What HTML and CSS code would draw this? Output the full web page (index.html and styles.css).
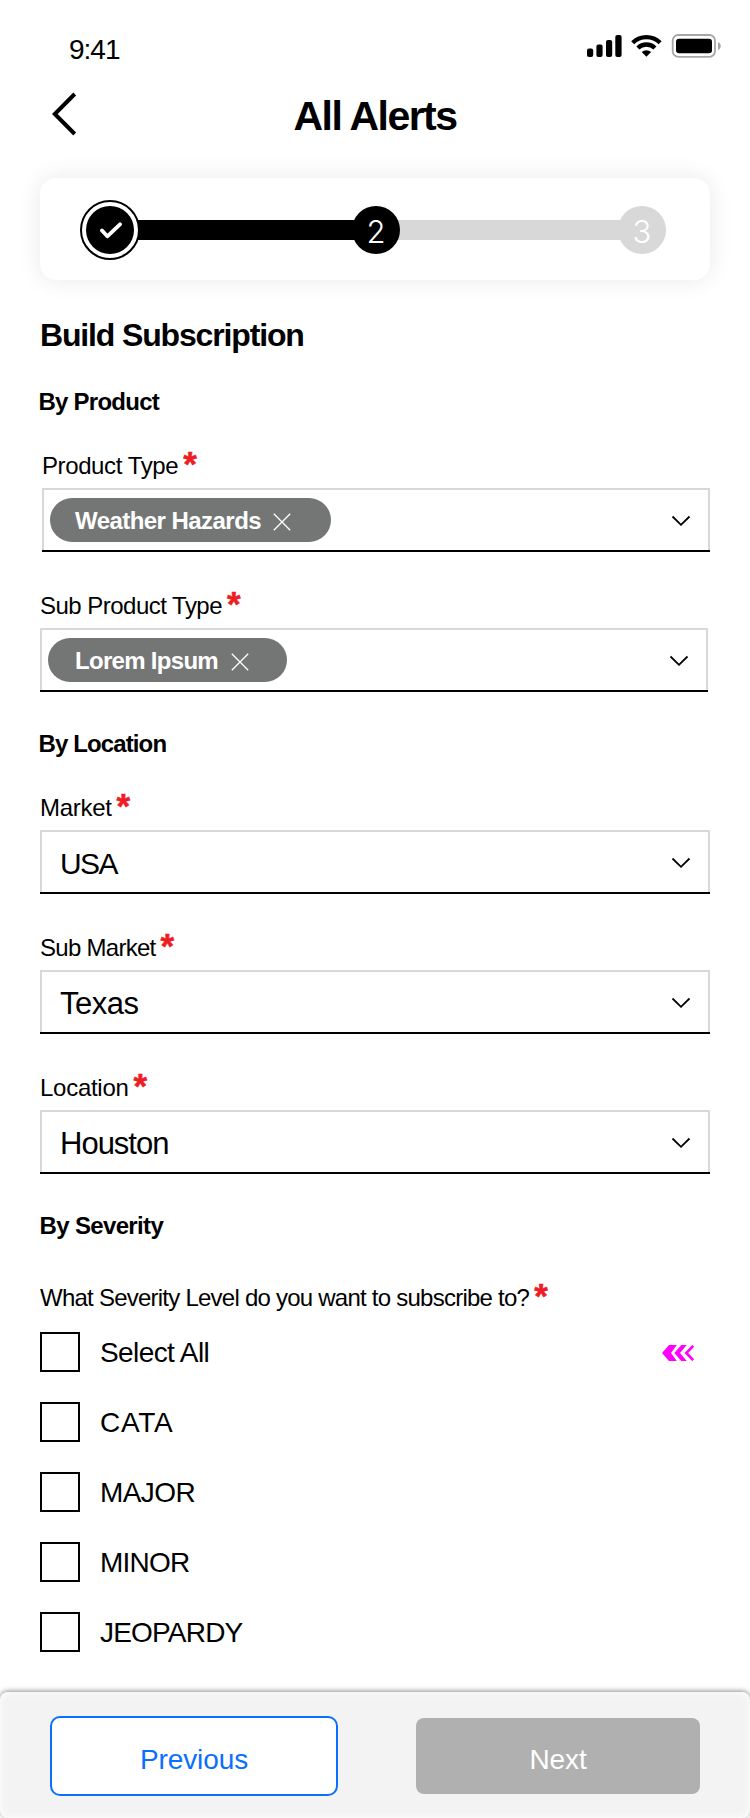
FILE: index.html
```html
<!DOCTYPE html>
<html lang="en">
<head>
<meta charset="utf-8">
<title>All Alerts</title>
<link rel="stylesheet" href="styles.css">
</head>
<body>
<svg class="defs" width="0" height="0">
  <symbol id="chevron" viewBox="0 0 20 12"><path d="M1.500 1.500 10 9.800l8.500-8.300" fill="none" stroke="#000" stroke-width="1.800"/></symbol>
  <symbol id="close" viewBox="0 0 18 18"><path d="M.8.8l16.400 16.400M17.200.8.8 17.200" fill="none" stroke="#fff" stroke-width="1.300"/></symbol>
</svg>
<div class="screen">
  <div class="status">
    <span class="time">9:41</span>
    <svg class="indicators" width="136" height="24" viewBox="0 0 136 24">
      <rect x="0" y="14.500" width="6.200" height="8.500" rx="2"/>
      <rect x="9.400" y="10.500" width="6.200" height="12.500" rx="2"/>
      <rect x="19" y="6" width="6.200" height="17" rx="2"/>
      <rect x="28.300" y="1" width="6.300" height="22" rx="2"/>
      <g fill="none" stroke="#000" stroke-width="4.300">
        <path d="M45.700 8.800a19.500 19.500 0 0 1 27.400 0"/>
        <path d="M50.900 14a12.100 12.100 0 0 1 17 0"/>
      </g>
      <path d="M59.400 22.800l-4.700-4.700a7 7 0 0 1 9.400 0z"/>
      <rect x="85.700" y="1" width="42.300" height="21.800" rx="5.500" fill="none" stroke="#a6a6a6" stroke-width="1.800"/>
      <rect x="89" y="4.700" width="36" height="14.600" rx="3"/>
      <path d="M131 8v8c3.700-1.500 3.700-6.500 0-8z" fill="#a6a6a6"/>
    </svg>
  </div>
  <header class="header">
    <svg class="back" width="26" height="44" viewBox="0 0 26 44"><path d="M22.700 2 2.800 22l19.900 20" fill="none" stroke="#000" stroke-width="4"/></svg>
    <h1 class="title">All Alerts</h1>
  </header>
  <div class="stepper">
    <div class="step-done"><div class="step-dot"><svg width="24" height="20" viewBox="0 0 24 20"><path d="M4 10.500l5.300 5.800L22 4.300" fill="none" stroke="#fff" stroke-width="3.800" stroke-linecap="round" stroke-linejoin="round"/></svg></div></div>
    <div class="bar bar-on"></div>
    <div class="step">2</div>
    <div class="bar bar-off"></div>
    <div class="step step-off">3</div>
  </div>
  <main class="form">
    <h2 class="heading">Build Subscription</h2>
    <h3 class="group group-first">By Product</h3>
    <div class="field field-inset">
      <div class="label"><span class="t-product">Product Type</span><span class="req">*</span></div>
      <div class="select select-chip"><div class="chip chip-weather"><span>Weather Hazards</span><svg class="close"><use href="#close"/></svg></div><svg class="chevron"><use href="#chevron"/></svg></div>
    </div>
    <div class="field field-short">
      <div class="label"><span class="t-subproduct">Sub Product Type</span><span class="req">*</span></div>
      <div class="select select-chip"><div class="chip chip-lorem"><span>Lorem Ipsum</span><svg class="close"><use href="#close"/></svg></div><svg class="chevron"><use href="#chevron"/></svg></div>
    </div>
    <h3 class="group group-location">By Location</h3>
    <div class="field">
      <div class="label"><span class="t-market">Market</span><span class="req">*</span></div>
      <div class="select"><span class="value v-usa">USA</span><svg class="chevron"><use href="#chevron"/></svg></div>
    </div>
    <div class="field">
      <div class="label"><span class="t-submarket">Sub Market</span><span class="req">*</span></div>
      <div class="select"><span class="value v-texas">Texas</span><svg class="chevron"><use href="#chevron"/></svg></div>
    </div>
    <div class="field">
      <div class="label"><span class="t-location">Location</span><span class="req">*</span></div>
      <div class="select"><span class="value">Houston</span><svg class="chevron"><use href="#chevron"/></svg></div>
    </div>
    <h3 class="group group-severity">By Severity</h3>
    <div class="label question"><span class="t-question">What Severity Level do you want to subscribe to?</span><span class="req">*</span></div>
    <div class="options">
      <div class="option"><span class="box"></span><span class="o-all">Select All</span>
        <svg class="arrows" width="33" height="16" viewBox="0 0 33 16"><path d="M0 8 7 0h7.800L9 8l5.800 8H7zM12.300 8 19.300 0h5.400L18 8l6.700 8h-5.400z" fill="#f0f"/><path d="M31.200.8 24.300 8l6.900 7.200" fill="none" stroke="#f0f" stroke-width="2.600"/></svg>
      </div>
      <div class="option"><span class="box"></span><span class="o-cata">CATA</span></div>
      <div class="option"><span class="box"></span><span class="o-major">MAJOR</span></div>
      <div class="option"><span class="box"></span><span class="o-minor">MINOR</span></div>
      <div class="option"><span class="box"></span><span class="o-jeopardy">JEOPARDY</span></div>
    </div>
  </main>
  <footer class="footer">
    <button class="btn prev">Previous</button>
    <button class="btn next">Next</button>
  </footer>
</div>
</body>
</html>
```
FILE: styles.css
```css
* { box-sizing: border-box; margin: 0; padding: 0; }
body { background: #fff; color: #000; font-family: "Liberation Sans", Arial, sans-serif; }
.defs { display: block; height: 0; }
.screen { width: 750px; height: 1818px; overflow: hidden; }
.status { height: 76px; padding: 34px 27px 0 69px; display: flex; justify-content: space-between; align-items: flex-start; }
.time { font-size: 28px; line-height: 32px; letter-spacing: -1px; }
.header { height: 80px; display: grid; grid-template-columns: 1fr auto 1fr; align-items: center; }
.back { margin: 0 0 4px 52px; }
.title { font-size: 41px; line-height: 48px; letter-spacing: -1.55px; }
.stepper { margin: 22px 40px 0; height: 102px; padding: 1px 44px 0 40px; border-radius: 16px; background: #fff; box-shadow: 0 0 24px rgba(0,0,0,.09); display: flex; align-items: center; }
.step-done { width: 60px; height: 60px; border: 2px solid #000; border-radius: 50%; padding: 4px; flex: none; }
.step-dot { width: 48px; height: 48px; border-radius: 50%; background: #000; display: flex; align-items: center; justify-content: center; }
.bar { height: 20px; background: #000; }
.bar-on { flex: none; width: 218px; margin: 0 -4px 0 -2px; }
.bar-off { flex: 1; margin: 0 -4px; background: #d8d8d8; }
.step { width: 48px; height: 48px; padding-top: 1px; border-radius: 50%; background: #000; color: #fff; flex: none; text-align: center; font: 300 31px/50px "Inter", sans-serif; position: relative; }
.step-off { background: #d8d8d8; }
.form { padding: 35px 40px 0; }
.heading { font-size: 32px; line-height: 40px; letter-spacing: -1.15px; }
.group { font-size: 24px; line-height: 32px; letter-spacing: -.75px; margin: 36px 0 32px -1.5px; }
.group-first { margin-top: 31px; }
.group-location { letter-spacing: -.88px; }
.group-severity { margin: 36px 0 40px -.5px; letter-spacing: -.65px; }
.field { padding-bottom: 2px; }
.field + .field { margin-top: 38px; }
.field-inset { margin-left: 2px; }
.field-short { margin-right: 2px; }
.label { display: flex; align-items: flex-start; height: 32px; margin-bottom: 6px; font-size: 24px; line-height: 32px; letter-spacing: -.52px; white-space: nowrap; }
.t-product { letter-spacing: -.4px; }
.t-market { letter-spacing: -.3px; }
.t-submarket { letter-spacing: -.72px; }
.t-location { letter-spacing: -.27px; }
.t-question { letter-spacing: -.76px; }
.req { color: #ee1c25; font-size: 35px; line-height: 27px; font-weight: 700; margin-left: 5px; -webkit-text-stroke: .5px #ee1c25; }
.select { height: 62px; border: 2px solid #d8d8d8; border-bottom: 0; box-shadow: 0 2px #000; display: flex; align-items: center; justify-content: space-between; padding: 0 17px 0 18px; }
.select-chip { padding-left: 6px; }
.value { font-size: 31px; line-height: 40px; letter-spacing: -1px; padding-top: 3px; }
.v-usa { font-size: 30px; letter-spacing: -1.6px; }
.v-texas { letter-spacing: -.5px; }
.chevron { width: 20px; height: 12px; margin-top: 1px; flex: none; }
.chip { height: 44px; border-radius: 22px; background: #747676; color: #fff; font-size: 24px; font-weight: 700; letter-spacing: -.7px; line-height: 44px; display: flex; align-items: center; justify-content: space-between; }
.chip span { padding-top: 1px; }
.close { width: 18px; height: 18px; margin-top: 4px; flex: none; }
.chip-weather { width: 281px; padding: 0 40px 0 25px; letter-spacing: -.55px; }
.chip-lorem { width: 239px; padding: 0 38px 0 27px; }
.question { margin-bottom: 18px; }
.options { display: flex; flex-direction: column; gap: 30px; }
.option { display: flex; align-items: center; height: 40px; font-size: 28px; line-height: 42px; }
.box { width: 40px; height: 40px; border: 2px solid #000; margin-right: 20px; }
.option span + span { padding-top: 1px; }
.o-all, .o-major { letter-spacing: -.6px; }
.o-cata { letter-spacing: .7px; }
.o-minor, .o-jeopardy { letter-spacing: -.8px; }
.arrows { margin: 2px 15px 0 auto; }
.footer { margin-top: 40px; height: 126px; padding: 24px 50px 0; border-radius: 8px; background: #f3f3f3; box-shadow: 0 -1px 5px rgba(0,0,0,.45), inset 0 0 8px #fff; display: flex; justify-content: space-between; align-items: flex-start; }
.btn { font: 28px/40px "Liberation Sans", Arial, sans-serif; letter-spacing: -.1px; }
.prev { width: 288px; height: 80px; padding-top: 8px; border: 2px solid #0a6fff; border-radius: 10px; background: #fff; color: #0a6fff; }
.next { width: 284px; height: 76px; margin-top: 2px; padding-top: 8px; border: 0; border-radius: 8px; background: #b0b0b0; color: #fff; }
```
